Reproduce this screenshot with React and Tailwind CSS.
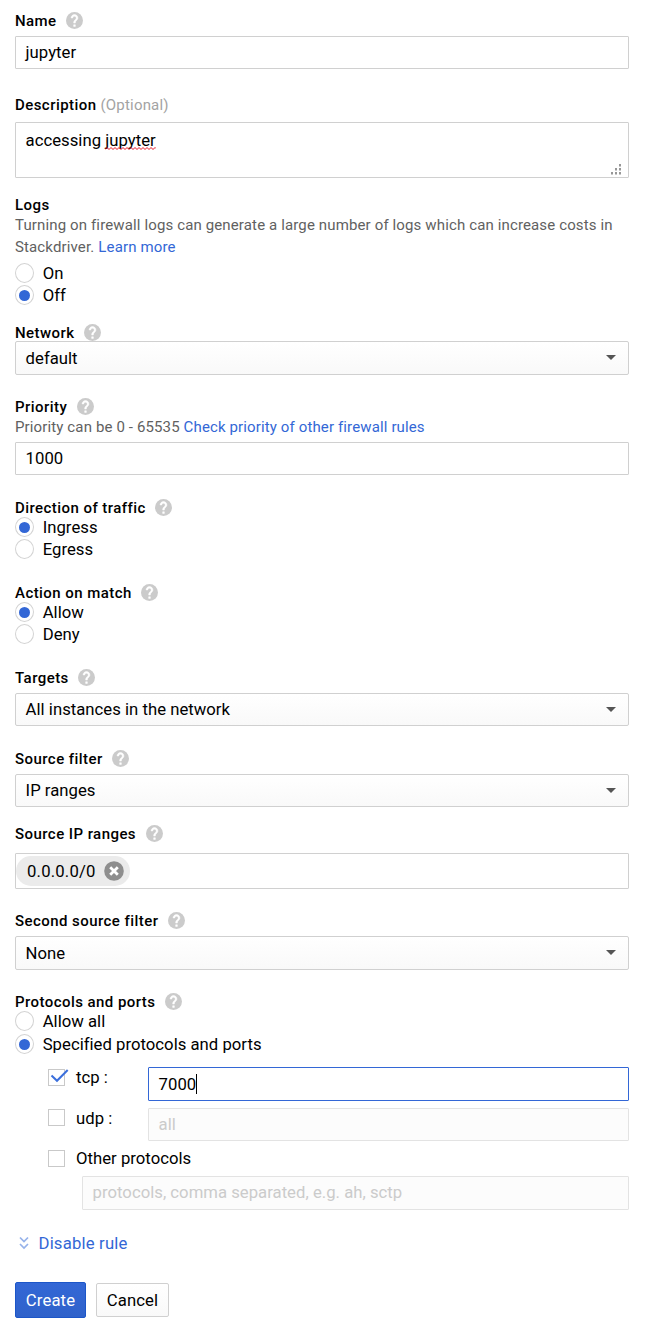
import React from "react";

function HelpIcon() {
  return (
    <svg className="-mt-[2px] mb-0 ml-[9.5px] h-[17px] w-[17px] shrink-0" viewBox="2 2 20 20">
      <circle cx="12" cy="12" r="10" fill="#cbcbcb" />
      <path
        d="M13 19h-2v-2h2v2zm2.07-7.75l-.9.92C13.45 12.9 13 13.5 13 15h-2v-.5c0-1.1.45-2.1 1.17-2.83l1.24-1.26c.37-.36.59-.86.59-1.41 0-1.1-.9-2-2-2s-2 .9-2 2H8c0-2.21 1.79-4 4-4s4 1.79 4 4c0 .88-.36 1.68-.93 2.25z"
        fill="#fff"
        stroke="#fff"
        strokeWidth="0.6"
      />
    </svg>
  );
}

function Label({ children, className = "", help = true, optional }) {
  return (
    <div className={`flex h-4 items-center text-[15px] leading-4 font-medium tracking-[0.44px] whitespace-nowrap ${className}`}>
      <span>{children}</span>
      {optional && <span className="ml-1 font-normal tracking-[0.2px] text-[#a3a3a3]">(Optional)</span>}
      {help && <HelpIcon />}
    </div>
  );
}

function Radio({ children, checked, className = "" }) {
  return (
    <div className={`flex h-[22px] items-center ${className}`}>
      <span className="flex h-[20px] w-[19px] items-center justify-center rounded-[50%] border border-[#d3d3d3] bg-white">
        {checked && <span className="h-[11px] w-[11px] rounded-full bg-[#3367d6]" />}
      </span>
      <span className="mt-[2px] ml-[8.7px]">{children}</span>
    </div>
  );
}

function Field({ children, className = "" }) {
  return (
    <div className={`flex items-center rounded-[1px] border px-[9.6px] ${className}`}>{children}</div>
  );
}

function Select({ children, className = "" }) {
  return (
    <div className={`flex items-center justify-between rounded-[2px] border border-[#d0d0d0] bg-linear-to-b from-white to-[#f9f9f9] pr-[12px] pl-[9.6px] ${className}`}>
      <span className="mt-px">{children}</span>
      <svg className="-mt-px h-[5px] w-[10px]" viewBox="0 0 10 5">
        <path d="M0 0h10L5 5z" fill="#555" />
      </svg>
    </div>
  );
}

function Checkbox({ checked, className = "" }) {
  return (
    <span className={`relative h-[17px] w-[17px] shrink-0 border border-[#c9c9c9] bg-white ${className}`}>
      {checked && (
        <svg className="absolute -top-[2px] left-[1px] h-[16px] w-[19px]" viewBox="0 0 19 16">
          <path d="M1.5 7.5L7 12.8L17.7 2" fill="none" stroke="#3b6fdc" strokeWidth="2" />
        </svg>
      )}
    </span>
  );
}

export default function App() {
  return (
    <main className="flex h-[1334px] w-[653px] flex-col bg-white pt-[13px] pr-[24px] pl-[15px] font-['Roboto',sans-serif] text-[16.7px] leading-5 tracking-[0.02px] text-black">
      <Label>Name</Label>
      <Field className="mt-[7px] h-[33px] border-[#d0d0d0]">jupyter</Field>

      <Label className="mt-7" help={false} optional>Description</Label>
      <div className="relative mt-[9px] h-[56px] rounded-[1px] border border-[#d0d0d0] px-[9.6px] pt-2">
        accessing{" "}
        <span className="relative inline-block">
          jupyter
          <svg className="absolute top-[16px] left-0 h-[3px] w-[51px]" viewBox="0 0 51 3">
            <path d="M0 2.5L2 .5L4 2.5L6 .5L8 2.5L10 .5L12 2.5L14 .5L16 2.5L18 .5L20 2.5L22 .5L24 2.5L26 .5L28 2.5L30 .5L32 2.5L34 .5L36 2.5L38 .5L40 2.5L42 .5L44 2.5L46 .5L48 2.5L50 .5L51 1.5" fill="none" stroke="#e81123" strokeWidth="1" />
          </svg>
        </span>
        <svg className="absolute right-[7px] bottom-[2px] h-[11px] w-[11px]" viewBox="0 0 11 11" fill="#979797">
          <path d="M9 0h2v2.5h-2zM5 4h2v2.5h-2zM9 4h2v2.5h-2zM1 8h2v2.5h-2zM5 8h2v2.5h-2zM9 8h2v2.5h-2z" />
        </svg>
      </div>

      <Label className="mt-[19px]" help={false}>Logs</Label>
      <div className="mt-px text-[15px] leading-[22px] tracking-[0.134px] whitespace-nowrap text-[#616161]">
        <p>Turning on firewall logs can generate a large number of logs which can increase costs in</p>
        <p className="flex gap-[4px]">
          <span>Stackdriver.</span>
          <a className="text-[#3367d6]">Learn more</a>
        </p>
      </div>
      <Radio className="mt-1">On</Radio>
      <Radio checked>Off</Radio>

      <Label className="mt-[19px]">Network</Label>
      <Select className="h-[34px]">default</Select>

      <Label className="mt-6">Priority</Label>
      <p className="mt-px text-[15px] leading-[22px] tracking-[0.13px] text-[#616161]">
        Priority can be 0 - 65535 <a className="text-[#3367d6]">Check priority of other firewall rules</a>
      </p>
      <Field className="mt-1 h-[33px] border-[#d0d0d0]">1000</Field>

      <Label className="mt-[25px]">Direction of traffic</Label>
      <Radio checked>Ingress</Radio>
      <Radio>Egress</Radio>

      <Label className="mt-[25px]">Action on match</Label>
      <Radio checked>Allow</Radio>
      <Radio>Deny</Radio>

      <Label className="mt-[25px]">Targets</Label>
      <Select className="mt-[7px] h-[33px]">All instances in the network</Select>

      <Label className="mt-[25px]">Source filter</Label>
      <Select className="mt-[7px] h-[33px]">IP ranges</Select>

      <Label className="mt-[19px]">Source IP ranges</Label>
      <div className="mt-[11px] flex h-[36px] items-center rounded-[1px] border border-[#d0d0d0]">
        <div className="flex h-[30px] w-[114px] items-center justify-between rounded-full bg-[#ebebeb] pr-[6.5px] pl-[11px]">
          <span className="mt-[2px] tracking-[0.18px]">0.0.0.0/0</span>
          <svg className="h-5 w-5" viewBox="0 0 20 20">
            <circle cx="10" cy="10" r="9.8" fill="#8e8e8e" />
            <path d="M6.2 6.2l7.6 7.6M13.8 6.2l-7.6 7.6" stroke="#fff" strokeWidth="2.8" />
          </svg>
        </div>
      </div>

      <Label className="mt-6">Second source filter</Label>
      <Select className="mt-[7px] h-[34px]">None</Select>

      <Label className="mt-6">Protocols and ports</Label>
      <Radio>Allow all</Radio>
      <Radio className="mt-px" checked>Specified protocols and ports</Radio>

      <div className="mt-3 flex h-[34px] items-start pl-[33px]">
        <div className="flex w-[100px] items-start pt-px">
          <Checkbox checked className="mt-px" />
          <span className="ml-[11px]">tcp :</span>
        </div>
        <Field className="h-[34px] flex-1 border-[#3367d6]">
          <span className="mt-px">7000</span>
          <span className="h-5 w-px bg-black" />
        </Field>
      </div>
      <div className="mt-[7px] flex h-[33px] items-start pl-[33px]">
        <div className="flex w-[100px] items-start">
          <Checkbox className="mt-px" />
          <span className="mt-px ml-[11px]">udp :</span>
        </div>
        <Field className="h-[33px] flex-1 border-[#e3e3e3] bg-[#fcfcfc] text-[#cbcbcb]">all</Field>
      </div>
      <div className="mt-2 flex h-[18px] items-start pl-[33px]">
        <Checkbox className="mt-px" />
        <span className="ml-[11px]">Other protocols</span>
      </div>
      <Field className="mt-[9px] ml-[67px] h-[34px] border-[#e3e3e3] bg-[#fcfcfc] text-[#cbcbcb]">
        protocols, comma separated, e.g. ah, sctp
      </Field>

      <div className="mt-[23px] flex h-5 items-center text-[#3367d6]">
        <svg className="ml-[3.5px] h-[14px] w-[10px]" viewBox="0 0 10 14" fill="none" stroke="#96b2ea" strokeWidth="1.7">
          <path d="M1 1.5l4 4 4-4M1 8l4 4 4-4" />
        </svg>
        <span className="mt-[2px] ml-[10px] tracking-[0.18px]">Disable rule</span>
      </div>

      <div className="mt-[29px] flex items-center gap-[10px]">
        <button className="h-[36px] w-[71px] rounded-[2px] border border-[#1c56c8] bg-linear-to-b from-[#3367d6] to-[#2f62ca] pt-[2px] text-white tracking-[0.12px]">Create</button>
        <button className="h-[34px] w-[73px] rounded-[2px] border border-[#d0d0d0] bg-linear-to-b from-white to-[#f9f9f9] pt-[2px] tracking-[0.12px]">Cancel</button>
      </div>
    </main>
  );
}
